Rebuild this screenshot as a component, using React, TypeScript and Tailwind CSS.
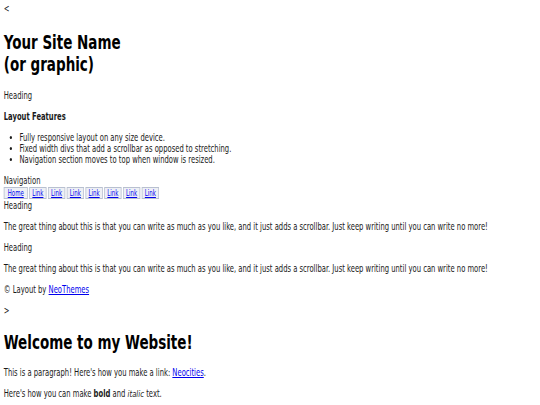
import React from "react";

const F = { fontFamily: '"DejaVu Sans Condensed", "DejaVu Sans", sans-serif' };
const FI = { fontFamily: '"DejaVu Sans", sans-serif' };

export default function App() {
  const links = ["Home", "Link", "Link", "Link", "Link", "Link", "Link", "Link"];
  return (
    <div className="w-[540px] h-[405px] overflow-hidden bg-white">
      <div
        className="w-[720px] origin-top-left scale-x-75 text-[#1a1a1a] text-[10.1px] leading-[11px] pl-[5px] pt-[3px]"
        style={F}
      >
        <div>&lt;</div>
        <h1 className="mt-[17px] text-[20px] leading-[22px] font-bold text-black">
          Your Site Name
          <br />
          (or graphic)
        </h1>
        <p className="mt-[15px]">Heading</p>
        <p className="mt-[10px] font-bold">Layout Features</p>
        <ul className="mt-[10px] list-disc pl-[21px]">
          <li>Fully responsive layout on any size device.</li>
          <li>Fixed width divs that add a scrollbar as opposed to stretching.</li>
          <li>Navigation section moves to top when window is resized.</li>
        </ul>
        <div className="mt-[10px]">Navigation</div>
        <div className="flex gap-[2px] mt-[1px]">
          {links.map((l, i) => (
            <span
              key={i}
              className={`${i === 0 ? "w-[32px]" : "w-[23px]"} h-[12px] flex items-center justify-center border border-[#b8c0d0] bg-[#eef0f5] text-[8px] leading-[9px] text-[#0000ee] underline`}
            >
              {l}
            </span>
          ))}
        </div>
        <p className="mt-[1px]">Heading</p>
        <p className="mt-[10px]">
          The great thing about this is that you can write as much as you like, and it just adds a scrollbar. Just keep writing until you can write no more!
        </p>
        <p className="mt-[10px]">Heading</p>
        <p className="mt-[10px]">
          The great thing about this is that you can write as much as you like, and it just adds a scrollbar. Just keep writing until you can write no more!
        </p>
        <p className="mt-[10px]">
          © Layout by <a className="text-[#0000ee] underline">NeoThemes</a>
        </p>
        <p className="mt-[10px]">&gt;</p>
        <h1 className="mt-[15px] text-[20px] leading-[22px] font-bold text-black">Welcome to my Website!</h1>
        <p className="mt-[14px]">
          This is a paragraph! Here's how you make a link: <a className="text-[#0000ee] underline">Neocities</a>.
        </p>
        <p className="mt-[10px]">
          Here's how you can make <b>bold</b> and{" "}
          <i className="italic text-[9.2px]" style={FI}>
            italic
          </i>{" "}
          text.
        </p>
      </div>
    </div>
  );
}
